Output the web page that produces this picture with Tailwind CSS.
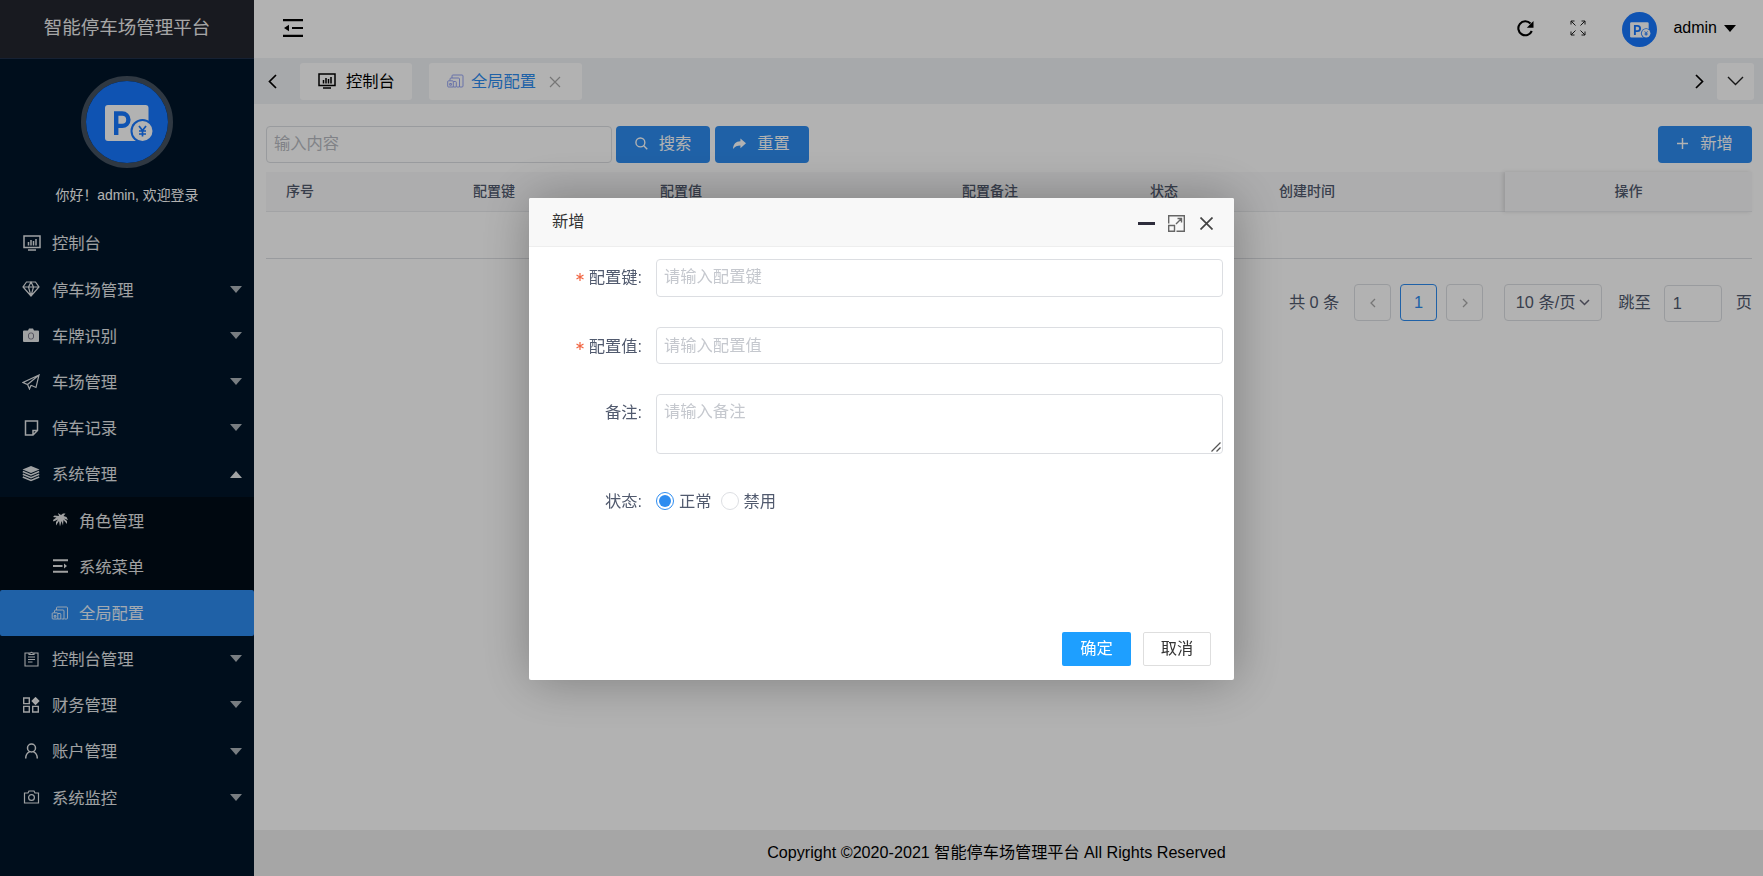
<!DOCTYPE html>
<html lang="zh-CN">
<head>
<meta charset="utf-8">
<title>智能停车场管理平台</title>
<script src="https://cdn.jsdelivr.net/npm/@tailwindcss/browser@4"></script>
</head>
<body class="h-[876px] w-[1763px] overflow-hidden bg-white font-['Liberation_Sans','Noto_Sans_CJK_SC',sans-serif] text-[16.3px] text-black">
<svg class="hidden">
  <symbol id="logo" viewBox="0 0 82 82"><circle cx="41" cy="41" r="41" fill="#1677ff"/><rect x="19" y="24" width="43.500" height="36" rx="3" fill="#fff"/><path d="M30.200 54V32.500h6a6.200 6.200 0 0 1 0 12.400h-6" fill="none" stroke="#1677ff" stroke-width="4.400"/><circle cx="56.500" cy="50" r="12" fill="#1677ff"/><circle cx="56.500" cy="50" r="10" fill="#fff"/><path d="m53 45 3.500 4.500L60 45M56.500 49.500V55.500M53 50h7M53 53h7" fill="none" stroke="#1677ff" stroke-width="1.700"/></symbol>
  <symbol id="board" viewBox="0 0 18 16"><path d="M1 1h16v11.500H1zM5 14.900h8M5.500 10.500V7M8 10.500V5M10.500 10.500V6M13 10.500V4" fill="none" stroke="currentColor" stroke-width="1.500"/></symbol>
  <symbol id="config" viewBox="0 0 17 14"><path d="M5 4V1.800Q5 1 6 1h9q1 0 1 1v10q0 1-1 1h-2M3 6.500V5q0-1 1-1h7.500q1 0 1 1v8H10M1.500 6.800h4q.8 0 .8.800V13H1.500q-.8 0-.8-.8V7.600q0-.8.800-.8zM2.700 9.500h1.700v1.700H2.700zM6.500 7.500h2q.8 0 .8.800V13H6.500" fill="none" stroke="currentColor" stroke-width=".9"/></symbol>
</svg>

<div class="flex h-full">
  <aside class="flex w-[254px] flex-col bg-[#001529] text-white/90">
    <div class="flex h-[58px] items-center justify-center bg-[#23262e] pb-[2px] text-[18.500px] text-[#eee]">智能停车场管理平台</div>
    <div class="flex h-[162px] flex-col items-center border-t border-[#20304a] pt-[17px]">
      <div class="flex size-[92px] items-center justify-center rounded-full border-[5px] border-[#44515f]"><svg class="size-[82px]"><use href="#logo"/></svg></div>
      <div class="mt-[17px] text-[13.900px] leading-[20px] text-white">你好！admin, 欢迎登录</div>
    </div>
    <nav class="flex flex-col [&>a]:flex [&>a]:h-[46.200px] [&>a]:items-center [&>a>svg:first-child]:w-[18px] [&>a>svg:first-child]:shrink-0 [&>a>span]:ml-[12px] [&>a>span]:flex-1 [&>a>span]:pt-[1px]">
      <a class="pr-[12px] pl-[23px]"><svg class="h-[16px]"><use href="#board"/></svg><span class="!ml-[11px]">控制台</span></a>
      <a class="pr-[12px] pl-[22px]"><svg class="h-[16px]" viewBox="0 0 18 16" fill="none" stroke="currentColor" stroke-width="1.200"><path d="M4.500 1h9L17 6l-8 9L1 6zM1 6h16M6.500 6 9 15l2.500-9M6.500 6 9 1l2.500 5"/></svg><span>停车场管理</span><svg class="h-[7px] w-[12px] opacity-75" viewBox="0 0 12 7" fill="currentColor"><path d="M0 0h12L6 7z"/></svg></a>
      <a class="pr-[12px] pl-[22px]"><svg class="h-[15px]" viewBox="0 0 18 15"><path d="M1 3.500Q1 2.500 2 2.500h4L7 .5h4l1 2h4q1 0 1 1V13q0 1-1 1H2q-1 0-1-1z" fill="currentColor"/><rect x="6.500" y="5" width="5" height="6" rx="2" fill="none" stroke="#778" stroke-width="1"/></svg><span>车牌识别</span><svg class="h-[7px] w-[12px] opacity-75" viewBox="0 0 12 7" fill="currentColor"><path d="M0 0h12L6 7z"/></svg></a>
      <a class="pr-[12px] pl-[22px]"><svg class="h-[16px]" viewBox="0 0 18 16" fill="none" stroke="currentColor" stroke-width="1.200"><path d="M17 1 1 8.500l4.500 2L17 1l-3 12.500-5-2.200M5.500 10.500 7.500 15l1.500-3.700"/></svg><span>车场管理</span><svg class="h-[7px] w-[12px] opacity-75" viewBox="0 0 12 7" fill="currentColor"><path d="M0 0h12L6 7z"/></svg></a>
      <a class="pr-[12px] pl-[22px]"><svg class="h-[16px]" viewBox="0 0 18 16" fill="none" stroke="currentColor" stroke-width="1.500"><path d="M3.500 1h12v9.500L11 15H3.500zM15.500 10.500H11V15"/></svg><span>停车记录</span><svg class="h-[7px] w-[12px] opacity-75" viewBox="0 0 12 7" fill="currentColor"><path d="M0 0h12L6 7z"/></svg></a>
      <a class="pr-[12px] pl-[22px]"><svg class="h-[16px]" viewBox="0 0 18 16"><path d="m9 0 8.500 3.500L9 7 .5 3.500z" fill="currentColor"/><path d="M.8 5.500 9 9l8.200-3.500M.8 8.200 9 11.700l8.200-3.500M.8 11 9 14.500l8.200-3.500" fill="none" stroke="currentColor" stroke-width="1.600"/></svg><span>系统管理</span><svg class="h-[7px] w-[12px]" viewBox="0 0 12 7" fill="currentColor"><path d="M0 7h12L6 0z"/></svg></a>
      <a class="bg-[#000c17] pl-[51px]"><svg class="h-[14px]" viewBox="0 0 18 14" fill="currentColor"><path d="M8 3 7 0l3 2 2-1.500h2.500L12.500 3l3 1L17 7l-4-1.500L16 8v3l-3.500-4L12 12.500 10.500 8 9 13.500 8 8l-3 4.500V9L7 6.500 2.500 8.500 2 7l3.500-2.500L2 4l1.500-1.500z"/></svg><span class="!ml-[10px]">角色管理</span></a>
      <a class="bg-[#000c17] pl-[51px]"><svg class="h-[14px]" viewBox="0 0 18 14"><path d="M2 1.300h15M2 7h9.500M2 12.700h15" stroke="currentColor" stroke-width="2"/><path d="M13 4.500v5l3-2.500z" fill="currentColor"/></svg><span class="!ml-[10px]">系统菜单</span></a>
      <a class="rounded-[2px] bg-[#2d8cf0] pl-[51px]"><svg class="h-[14px]"><use href="#config"/></svg><span class="!ml-[10px]">全局配置</span></a>
      <a class="pr-[12px] pl-[22px]"><svg class="h-[16px]" viewBox="0 0 18 16" fill="none" stroke="currentColor" stroke-width="1.100"><path d="M6.500 2H3v13h13V2h-3.500M7 3.500V2h1.500q1-1.500 2 0H12v1.500zM6 6h7M6 8.500h7M6 11h4.500"/></svg><span>控制台管理</span><svg class="h-[7px] w-[12px] opacity-75" viewBox="0 0 12 7" fill="currentColor"><path d="M0 0h12L6 7z"/></svg></a>
      <a class="pr-[12px] pl-[22px]"><svg class="h-[16px]" viewBox="0 0 18 16" fill="none" stroke="currentColor" stroke-width="1.400"><path d="M1.700 1h5.600v5.600H1.700zM1.700 9.400h5.600V15H1.700zM10.700 9.400h5.600V15h-5.600z"/><path d="m13.500.8 3.200 3.200-3.200 3.200L10.300 4z" fill="currentColor"/></svg><span>财务管理</span><svg class="h-[7px] w-[12px] opacity-75" viewBox="0 0 12 7" fill="currentColor"><path d="M0 0h12L6 7z"/></svg></a>
      <a class="pr-[12px] pl-[22px]"><svg class="h-[16px]" viewBox="0 0 18 16" fill="none" stroke="currentColor" stroke-width="1.500"><circle cx="9.500" cy="5" r="4"/><path d="M3.700 15.500c0-3.500 2-6 4-6.900M15.300 15.500c0-3.500-2-6-4-6.900"/></svg><span>账户管理</span><svg class="h-[7px] w-[12px] opacity-75" viewBox="0 0 12 7" fill="currentColor"><path d="M0 0h12L6 7z"/></svg></a>
      <a class="pr-[12px] pl-[22px]"><svg class="h-[14px]" viewBox="0 0 18 14" fill="none" stroke="currentColor" stroke-width="1.200"><path d="M2.500 3H6l1-2h5l1 2h3.500v10h-14z"/><circle cx="9.500" cy="7.500" r="2.900"/></svg><span>系统监控</span><svg class="h-[7px] w-[12px] opacity-75" viewBox="0 0 12 7" fill="currentColor"><path d="M0 0h12L6 7z"/></svg></a>
    </nav>
  </aside>

  <main class="flex flex-1 flex-col">
    <header class="flex h-[58px] items-center pr-[27px] pl-[29px]">
      <svg class="mt-[-2px] h-[18px] w-[20px]" viewBox="0 0 20 18"><path d="M0 1.200h20M9 9h11M0 16.800h20" stroke="#000" stroke-width="2.200"/><path d="M6 5.800v6.400L1 9z"/></svg>
      <div class="flex-1"></div>
      <svg class="mt-[-2px] mr-[36px] size-[17px]" viewBox="0 0 17 17"><path d="M14.800 11A7 7 0 1 1 13.500 3.500" fill="none" stroke="#000" stroke-width="2.100"/><path d="M16.500 1v6.800H9.800z"/></svg>
      <svg class="mt-[-3px] mr-[36px] size-[16px]" viewBox="0 0 16 16" fill="none" stroke="#222" stroke-width="1"><path d="M1 4.500V1h3.500M1 1l4.500 4.500M11.500 1H15v3.500M15 1l-4.500 4.500M1 11.500V15h3.500M1 15l4.500-4.500M15 11.500V15h-3.500M15 15l-4.500-4.500"/></svg>
      <svg class="size-[35px]"><use href="#logo"/></svg>
      <span class="ml-[16px] pb-[2px] text-[16px]">admin</span>
      <svg class="mt-[-1px] ml-[7px] h-[7px] w-[12px]" viewBox="0 0 12 7"><path d="M0 0h12L6 7z"/></svg>
    </header>

    <div class="flex h-[46px] items-center bg-[#f0f2f5] pr-[9px]">
      <svg class="ml-[14px] h-[15px] w-[9px]" viewBox="0 0 9 15" fill="none" stroke="#000" stroke-width="1.700"><path d="M8 1 1.500 7.500 8 14"/></svg>
      <div class="ml-[23px] flex h-[37px] w-[112px] items-center rounded-[3px] bg-white pl-[18px]"><svg class="h-[16px] w-[18px]"><use href="#board"/></svg><span class="ml-[10px] pt-[1px]">控制台</span></div>
      <div class="ml-[17px] flex h-[37px] w-[153px] items-center rounded-[3px] bg-white pl-[18px] text-[#2d8cf0]"><svg class="h-[14px] w-[17px] text-[#8a9af0]"><use href="#config"/></svg><span class="ml-[7px] pt-[1px]">全局配置</span><svg class="mt-[2px] ml-[13px] size-[12px]" viewBox="0 0 12 12" stroke="#aaa" stroke-width="1.200"><path d="m1 1 10 10M11 1 1 11"/></svg></div>
      <div class="flex-1"></div>
      <svg class="h-[15px] w-[9px]" viewBox="0 0 9 15" fill="none" stroke="#000" stroke-width="1.700"><path d="m1 1 6.500 6.500L1 14"/></svg>
      <div class="ml-[13px] flex size-[37px] items-center justify-center rounded-[3px] bg-white"><svg class="h-[10px] w-[17px]" viewBox="0 0 17 10" fill="none" stroke="#222" stroke-width="1.400"><path d="m1 1 7.500 7.500L16 1"/></svg></div>
    </div>

    <section class="flex flex-1 flex-col pt-[21.500px] pr-[11px] pl-[12px]">
      <div class="flex h-[37.500px] text-white">
        <div class="flex w-[346px] items-center rounded-[4px] border border-[#dcdee2] px-[7px] pb-[3px] text-[#b8bbc2]">输入内容</div>
        <button class="ml-[4px] flex w-[94px] items-center justify-center rounded-[4px] bg-[#2d8cf0] pb-[3px]"><svg class="mt-[2px] mr-[11px] size-[13px]" viewBox="0 0 14 14" fill="none" stroke="currentColor" stroke-width="1.500"><circle cx="5.800" cy="5.800" r="4.800"/><path d="m9.200 9.200 4 4"/></svg>搜索</button>
        <button class="ml-[4.500px] flex w-[94px] items-center justify-center rounded-[4px] bg-[#2d8cf0] pb-[3px]"><svg class="mt-[2px] mr-[11px] h-[12px] w-[13px]" viewBox="0 0 14 12" fill="currentColor"><path d="M8 0v3C3 3 .3 6 0 11.500 2 8.500 4.500 7.500 8 7.500V10.500l6-5.200z"/></svg>重置</button>
        <button class="ml-auto flex w-[94px] items-center justify-center rounded-[4px] bg-[#2d8cf0] pb-[3px]"><svg class="mt-[2px] mr-[12px] size-[11px]" viewBox="0 0 12 12" stroke="currentColor" stroke-width="1.600"><path d="M6 0v12M0 6h12"/></svg>新增</button>
      </div>
      <div class="mt-[9px] grid h-[40px] grid-cols-[187px_187px_302px_188px_129px_246px_1fr] items-center border-b border-[#e8eaec] bg-[#f8f8f9] text-[14px] font-medium text-[#515a6e] [&>div]:pl-[20px] [&>div]:pb-[2px]">
        <div>序号</div><div>配置键</div><div>配置值</div><div>配置备注</div><div>状态</div><div>创建时间</div>
        <div class="flex h-[40px] items-center justify-center !pl-0 shadow-[-2px_0_4px_rgba(0,0,0,0.12)]">操作</div>
      </div>
      <div class="h-[47px] border-b border-[#dcdee2]"></div>
      <div class="mt-[25px] flex h-[37px] items-center justify-end text-[#515a6e]">
        <span class="mr-[15px] tracking-[-0.1px]">共 0 条</span>
        <div class="flex size-[37px] items-center justify-center rounded-[4px] border border-[#dcdee2]"><svg class="h-[10px] w-[6px]" viewBox="0 0 6 10" fill="none" stroke="#aaa" stroke-width="1.300"><path d="M5 1 1 5l4 4"/></svg></div>
        <div class="ml-[9px] flex size-[37px] items-center justify-center rounded-[4px] border border-[#2d8cf0] text-[#2d8cf0]">1</div>
        <div class="ml-[9px] flex size-[37px] items-center justify-center rounded-[4px] border border-[#dcdee2]"><svg class="h-[10px] w-[6px]" viewBox="0 0 6 10" fill="none" stroke="#aaa" stroke-width="1.300"><path d="m1 1 4 4-4 4"/></svg></div>
        <div class="ml-[21px] flex h-[37px] w-[98px] items-center justify-center gap-[4px] rounded-[4px] border border-[#dcdee2]"><span>10 条/页</span><svg class="h-[7px] w-[11px]" viewBox="0 0 11 7" fill="none" stroke="#667" stroke-width="1.500"><path d="m1 1 4.500 4.500L10 1"/></svg></div>
        <span class="ml-[16px]">跳至</span>
        <div class="mt-[2px] ml-[13px] flex h-[37px] w-[58px] items-center rounded-[4px] border border-[#dcdee2] px-[8px]">1</div>
        <span class="ml-[14px]">页</span>
      </div>
    </section>
    <footer class="flex h-[46px] items-center justify-center bg-[#eee] pr-[24px] pb-[2px] text-[16.150px]">Copyright ©2020-2021 智能停车场管理平台 All Rights Reserved</footer>
  </main>
</div>

<div class="fixed inset-0 flex items-start bg-black/30 pt-[198px] pl-[529px]">
  <div class="flex h-[482px] w-[705px] flex-col rounded-[2px] bg-white shadow-[1px_1px_50px_rgba(0,0,0,0.3)]">
    <div class="flex h-[49px] items-center rounded-t-[2px] border-b border-[#eee] bg-[#f8f8f8] pr-[21px] pl-[23px] text-[#333]">
      <span class="flex-1 pb-[2px]">新增</span>
      <svg class="mt-[2px] mr-[13px] h-[3px] w-[17px]" viewBox="0 0 17 3"><path d="M0 0h17v3H0z" fill="#2e2d3c"/></svg>
      <svg class="mt-[2px] mr-[15px] size-[17px]" viewBox="0 0 17 17" fill="none" stroke="#666" stroke-width="1.400"><path d="M.7 8.500V.700h15.600v15.600H8.500M.7 10.500h5.800v5.800H.700zM8 9l5.500-5.500M9.500 3.500h4v4"/></svg>
      <svg class="mt-[2px] size-[13px]" viewBox="0 0 13 13" stroke="#444" stroke-width="1.700"><path d="m.5.5 12 12M12.500.5l-12 12"/></svg>
    </div>
    <form class="flex flex-1 flex-col pt-[12px] text-[#515a6e]">
      <div class="flex h-[37.500px]"><label class="flex w-[127px] items-start justify-end pt-[6px] pr-[14px]"><svg class="mt-[8px] mr-[5px] size-[8px]" viewBox="0 0 8 8" stroke="#ed4014" stroke-opacity=".8" stroke-width="1.200"><path d="M4 0v8M.500 2l7 4M7.500 2l-7 4"/></svg>配置键:</label><div class="flex w-[567px] items-center rounded-[4px] border border-[#dcdee2] px-[7px] pb-[3px] text-[#c5c8ce]">请输入配置键</div></div>
      <div class="mt-[30px] flex h-[37.500px]"><label class="flex w-[127px] items-start justify-end pt-[7px] pr-[14px]"><svg class="mt-[8px] mr-[5px] size-[8px]" viewBox="0 0 8 8" stroke="#ed4014" stroke-opacity=".8" stroke-width="1.200"><path d="M4 0v8M.500 2l7 4M7.500 2l-7 4"/></svg>配置值:</label><div class="flex w-[567px] items-center rounded-[4px] border border-[#dcdee2] px-[7px] pb-[1px] text-[#c5c8ce]">请输入配置值</div></div>
      <div class="mt-[30px] flex h-[60px]"><label class="w-[127px] pt-[6px] pr-[14px] text-right">备注:</label><div class="flex w-[567px] items-end justify-between rounded-[4px] border border-[#dcdee2] pr-[1px] pb-[1px] pl-[7px] text-[#c5c8ce]"><span class="self-start pt-[4px]">请输入备注</span><svg class="size-[10px]" viewBox="0 0 10 10" stroke="#555" stroke-width="1.300"><path d="m.5 9.500 9-9M5.500 9.500l4-4"/></svg></div></div>
      <div class="mt-[28px] flex h-[38px] items-center"><label class="w-[127px] pr-[14px] text-right">状态:</label>
        <span class="flex size-[18px] items-center justify-center rounded-full border border-[#2d8cf0]"><i class="size-[12px] rounded-full bg-[#2d8cf0]"></i></span><span class="ml-[5px]">正常</span>
        <span class="ml-[9px] size-[18px] rounded-full border border-[#dcdee2]"></span><span class="ml-[5px]">禁用</span>
      </div>
    </form>
    <div class="flex justify-end gap-[12px] pr-[23px] pb-[14px] text-[#333]">
      <button class="flex h-[34px] w-[69px] items-center justify-center rounded-[2px] bg-[#1e9fff] pb-[2px] text-white">确定</button>
      <button class="flex h-[34px] w-[68px] items-center justify-center rounded-[2px] border border-[#dedede] pb-[2px]">取消</button>
    </div>
  </div>
</div>
</body>
</html>
